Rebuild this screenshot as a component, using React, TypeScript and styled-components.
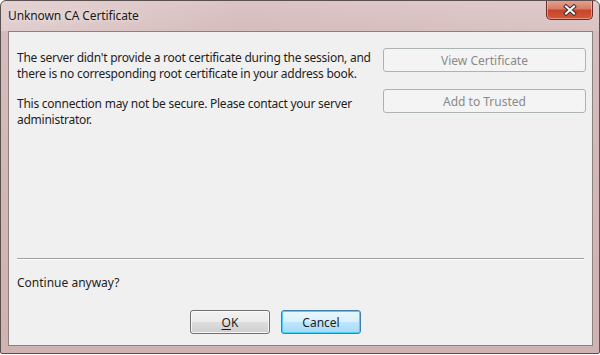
import React from 'react';
import styled, { createGlobalStyle } from 'styled-components';

const GlobalStyle = createGlobalStyle`
    html, body {
        margin: 0;
        padding: 0;
        background: #ffffff;
    }
    body {
        font-family: "Noto Sans", "Open Sans", "DejaVu Sans", sans-serif;
        font-size: 12px;
        color: #1e1e1e;
    }
`;

export default function App() {
    return (
        <>
            <GlobalStyle />
            <Window>
                <TitleBar>
                    <Title>Unknown CA Certificate</Title>
                    <CloseButton aria-label="Close">
                        <svg width="14" height="12" viewBox="0 0 14 12">
                            <path d="M3 2.5 L11 9.5 M11 2.5 L3 9.5" stroke="#3a3030" strokeWidth="4" strokeLinecap="square" />
                            <path d="M3 2.5 L11 9.5 M11 2.5 L3 9.5" stroke="#ffffff" strokeWidth="2" strokeLinecap="square" />
                        </svg>
                    </CloseButton>
                </TitleBar>
                <Client>
                    <TopArea>
                        <Messages>
                            <Message>
                                The server didn't provide a root certificate during the session, and
                                <br />
                                there is no corresponding root certificate in your address book.
                            </Message>
                            <Message>
                                This connection may not be secure. Please contact your server
                                <br />
                                administrator.
                            </Message>
                        </Messages>
                        <SideButtons>
                            <PushButton disabled>View Certificate</PushButton>
                            <PushButton disabled>Add to Trusted</PushButton>
                        </SideButtons>
                    </TopArea>
                    <Separator />
                    <Question>Continue anyway?</Question>
                    <ButtonRow>
                        <DialogButton>
                            <u>O</u>K
                        </DialogButton>
                        <DialogButton $focused>Cancel</DialogButton>
                    </ButtonRow>
                </Client>
            </Window>
        </>
    );
}

const Window = styled.div`
    box-sizing: border-box;
    width: 600px;
    height: 354px;
    display: flex;
    flex-direction: column;
    border: 1px solid #5a5050;
    border-radius: 6px 6px 2px 2px;
    background: linear-gradient(180deg, #dcc4c4 0px, #d6bcbc 30px, #cfb2b2 100%);
    overflow: hidden;
`;

const TitleBar = styled.div`
    height: 30px;
    display: flex;
    align-items: flex-start;
    justify-content: space-between;
    padding-left: 7px;
    padding-right: 6px;
    background: linear-gradient(90deg, rgba(255, 255, 255, 0.25), rgba(255, 255, 255, 0) 40%, rgba(255, 255, 255, 0.1));
`;

const Title = styled.div`
    margin-top: 6px;
    font-size: 12px;
    letter-spacing: -0.1px;
    color: #1a1a1a;
    text-shadow: 0 0 6px rgba(255, 255, 255, 0.9);
`;

const CloseButton = styled.button`
    box-sizing: border-box;
    flex-shrink: 0;
    width: 47px;
    height: 20px;
    margin-top: -1px;
    padding: 0;
    display: flex;
    align-items: center;
    justify-content: center;
    border: 1px solid #6d2a2a;
    border-top: none;
    border-radius: 0 0 5px 5px;
    background: linear-gradient(180deg, #e8a493 0%, #d57d67 45%, #c7452b 55%, #d5583a 100%);
    box-shadow: inset 0 0 0 1px rgba(255, 210, 200, 0.5);
`;

const Client = styled.div`
    flex: 1;
    display: flex;
    flex-direction: column;
    margin: 0 6px 7px 7px;
    padding: 16px 6px 11px 8px;
    border: 1px solid #8d8080;
    background: #f0f0f0;
`;

const TopArea = styled.div`
    flex: 1;
    display: flex;
    justify-content: space-between;
`;

const Messages = styled.div`
    display: flex;
    flex-direction: column;
    gap: 14px;
    padding-top: 2px;
    white-space: nowrap;
    letter-spacing: -0.25px;
`;

const Message = styled.p`
    margin: 0;
    line-height: 16px;
`;

const SideButtons = styled.div`
    width: 203px;
    display: flex;
    flex-direction: column;
    gap: 17px;
`;

const PushButton = styled.button`
    box-sizing: border-box;
    height: 24px;
    font-family: inherit;
    font-size: 12px;
    color: #8a8a8a;
    background: #f4f4f4;
    border: 1px solid #adb2b5;
    border-radius: 3px;
`;

const Separator = styled.div`
    height: 1px;
    margin-right: 2px;
    background: #a0a0a0;
    border-bottom: 1px solid #ffffff;
`;

const Question = styled.div`
    margin-top: 15px;
    line-height: 16px;
`;

const ButtonRow = styled.div`
    display: flex;
    gap: 11px;
    margin-top: 19px;
    padding-left: 173px;
`;

const DialogButton = styled.button<{ $focused?: boolean }>`
    box-sizing: border-box;
    width: 80px;
    height: 24px;
    font-family: inherit;
    font-size: 12px;
    color: #1e1e1e;
    border-radius: 3px;
    border: 1px solid ${p => (p.$focused ? '#3c7fb1' : '#707070')};
    background: ${p =>
        p.$focused
            ? 'linear-gradient(180deg, #eaf6fd 0%, #d9f0fc 50%, #bee6fd 51%, #a7d9f5 100%)'
            : 'linear-gradient(180deg, #f2f2f2 0%, #ebebeb 50%, #dddddd 51%, #cfcfcf 100%)'};
    box-shadow: inset 0 0 0 1px ${p => (p.$focused ? '#48d0f9' : 'rgba(255, 255, 255, 0.8)')};
    u {
        text-decoration-thickness: 1px;
        text-underline-offset: 2px;
    }
`;
